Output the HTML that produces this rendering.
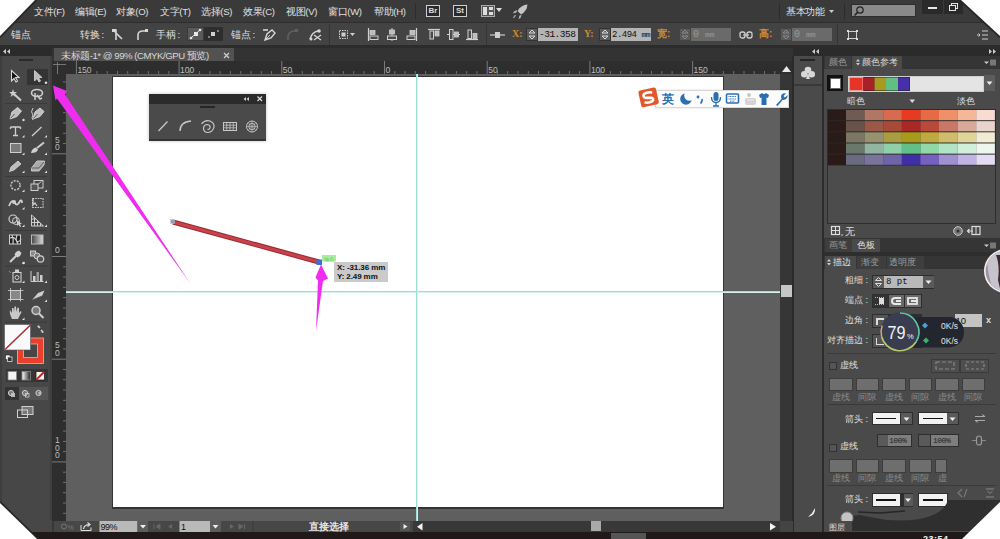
<!DOCTYPE html>
<html><head><meta charset="utf-8">
<style>
*{margin:0;padding:0;box-sizing:border-box}
html,body{width:1000px;height:539px;overflow:hidden;background:#3a3a3a;font-family:"Liberation Sans",sans-serif;color:#d0d0d0}
.a{position:absolute}
.t{position:absolute;font-size:9px;line-height:11px;white-space:nowrap;color:#e0e0e0;font-weight:500}
.m{font-size:9.6px;letter-spacing:-0.35px;line-height:12px}
</style></head><body>
<!-- menu bar -->
<div class="a" style="left:0;top:0;width:1000px;height:22px;background:#3a3a3a"></div>
<!-- control bar -->
<div class="a" style="left:0;top:22px;width:1000px;height:23px;background:#434343;border-top:1px solid #2e2e2e"></div>
<div class="a" style="left:0;top:45px;width:1000px;height:3px;background:#2c2c2c"></div>
<!-- doc row -->
<div class="a" style="left:52px;top:48px;width:728px;height:13px;background:#333"></div>
<div class="a" style="left:54px;top:48px;width:180px;height:13px;background:#525252"></div>
<!-- left toolbar -->
<div class="a" style="left:0;top:48px;width:52px;height:8px;background:#2b2b2b"></div>
<div class="a" style="left:0;top:56px;width:52px;height:476px;background:#474747"></div>
<!-- rulers -->
<div class="a" style="left:52px;top:61px;width:728px;height:13px;background:#2e2e2e"></div>
<div class="a" style="left:52px;top:61px;width:14px;height:460px;background:#2e2e2e"></div>
<!-- canvas -->
<div class="a" style="left:66px;top:74px;width:714px;height:447px;background:#5f5f5f"></div>
<div class="a" style="left:112px;top:76px;width:612px;height:433px;background:#343434"></div>
<div class="a" style="left:113px;top:77px;width:610px;height:430px;background:#fff"></div>
<!-- guides -->
<div class="a" style="left:66px;top:291px;width:714px;height:1px;background:#9edcd8"></div><div class="a" style="left:66px;top:292px;width:714px;height:1px;background:#d4f2f0"></div>
<div class="a" style="left:416px;top:74px;width:1px;height:447px;background:#9edcd8"></div><div class="a" style="left:417px;top:74px;width:1px;height:447px;background:#d4f2f0"></div>
<!-- vscroll -->
<div class="a" style="left:780px;top:61px;width:13px;height:460px;background:#2f2f2f"></div>
<!-- dock + right panel -->
<div class="a" style="left:793px;top:48px;width:207px;height:8px;background:#2b2b2b"></div>
<div class="a" style="left:793px;top:56px;width:29px;height:475px;background:#474747"></div>
<div class="a" style="left:822px;top:56px;width:2px;height:475px;background:#2b2b2b"></div>
<div class="a" style="left:824px;top:56px;width:176px;height:475px;background:#4b4b4b"></div>
<!-- status bar -->
<div class="a" style="left:52px;top:521px;width:728px;height:11px;background:#3d3d3d"></div>
<div class="a" style="left:0;top:532px;width:1000px;height:7px;background:#1f1a19"></div>

<!-- menu texts -->
<div class="t m" style="left:34px;top:6px">文件(F)</div>
<div class="t m" style="left:75px;top:6px">编辑(E)</div>
<div class="t m" style="left:116px;top:6px">对象(O)</div>
<div class="t m" style="left:160px;top:6px">文字(T)</div>
<div class="t m" style="left:201px;top:6px">选择(S)</div>
<div class="t m" style="left:243px;top:6px">效果(C)</div>
<div class="t m" style="left:286px;top:6px">视图(V)</div>
<div class="t m" style="left:328px;top:6px">窗口(W)</div>
<div class="t m" style="left:374px;top:6px">帮助(H)</div>
<div class="a" style="left:415px;top:3px;width:1px;height:16px;background:#2c2c2c"></div>
<div class="a" style="left:426px;top:5px;width:14px;height:12px;border:1px solid #cfcfcf;background:#2a2a2a;font-size:8px;line-height:10px;text-align:center;color:#ddd;font-weight:bold">Br</div>
<div class="a" style="left:453px;top:5px;width:14px;height:12px;border:1px solid #cfcfcf;background:#2a2a2a;font-size:8px;line-height:10px;text-align:center;color:#ddd;font-weight:bold">St</div>
<div class="a" style="left:481px;top:5px;width:14px;height:12px;border:1px solid #aaa;background:#555"></div>
<div class="a" style="left:483px;top:7px;width:4px;height:8px;background:#ddd"></div>
<div class="a" style="left:489px;top:7px;width:4px;height:3px;background:#ddd"></div>
<div class="a" style="left:489px;top:12px;width:4px;height:3px;background:#ddd"></div>
<svg class="a" style="left:496px;top:8px" width="7" height="5"><polygon points="0,0 6,0 3,4" fill="#ddd"/></svg>
<svg class="a" style="left:512px;top:3px" width="17" height="17"><path d="M15.5,1.5 Q9,2 5.5,8 L9,11.5 Q15,8 15.5,1.5 Z" fill="#c4c4c4"/><path d="M5,7 L2,8.5 L1,10.5 L4.5,9.5 Z M9.5,12 L8.5,15 L6.5,16 L7.5,12.5 Z" fill="#b8b8b8"/><path d="M3.5,12 L1.5,15" stroke="#aaa" stroke-width="1.3"/></svg>
<div class="a" style="left:779px;top:3px;width:1px;height:16px;background:#2c2c2c"></div>
<div class="t m" style="left:786px;top:6px">基本功能</div>
<svg class="a" style="left:829px;top:10px" width="6" height="4"><polygon points="0,0 5,0 2.5,3" fill="#ccc"/></svg>
<div class="a" style="left:844px;top:3px;width:1px;height:16px;background:#2c2c2c"></div>
<div class="a" style="left:851px;top:4px;width:65px;height:13px;background:#8a8a8a;border:1px solid #2e2e2e"></div>
<svg class="a" style="left:853px;top:5px" width="12" height="12"><circle cx="7" cy="5" r="3.2" fill="none" stroke="#222" stroke-width="1.2"/><line x1="4.6" y1="7.4" x2="1.5" y2="10.5" stroke="#222" stroke-width="1.5"/></svg>
<div class="a" style="left:922px;top:0;width:21px;height:14px;background:#2a2a2a"></div>
<div class="a" style="left:928px;top:7px;width:9px;height:2px;background:#e6e6e6"></div>
<div class="a" style="left:944px;top:0;width:19px;height:14px;background:#2a2a2a"></div>
<div class="a" style="left:951px;top:3px;width:7px;height:6px;border:1px solid #e6e6e6"></div>
<div class="a" style="left:949px;top:5px;width:7px;height:6px;border:1px solid #e6e6e6;background:#2a2a2a"></div>


<!-- control bar content -->
<div class="t m" style="left:11px;top:29px">锚点</div>
<div class="t m" style="left:80px;top:29px">转换 :</div>
<svg class="a" style="left:111px;top:28px" width="14" height="14"><path d="M2,2 H5 V12 M4,4 L11,11" stroke="#d6d6d6" stroke-width="1.6" fill="none"/><rect x="1" y="1" width="4" height="3" fill="#d6d6d6"/></svg>
<svg class="a" style="left:135px;top:28px" width="14" height="14"><path d="M3,12 V7 Q3,3 8,3 H12" stroke="#d6d6d6" stroke-width="1.6" fill="none"/><rect x="10" y="1" width="3" height="3" fill="#d6d6d6"/></svg>
<div class="t m" style="left:156px;top:29px">手柄 :</div>
<div class="a" style="left:187px;top:27px;width:17px;height:14px;background:#5a5a5a;border:1px solid #3a3a3a"></div>
<svg class="a" style="left:187px;top:27px" width="17" height="14"><path d="M4,11 L13,3" stroke="#e0e0e0" stroke-width="1"/><rect x="7" y="5" width="4" height="4" fill="#e8e8e8"/><circle cx="4" cy="11" r="1.3" fill="#e8e8e8"/><circle cx="13" cy="3" r="1.3" fill="#e8e8e8"/></svg>
<div class="a" style="left:204px;top:27px;width:19px;height:14px;background:#2e2e2e"></div>
<svg class="a" style="left:204px;top:27px" width="19" height="14"><rect x="7" y="5" width="4" height="4" fill="#d0d0d0"/><circle cx="5" cy="10" r="0.9" fill="#aaa"/><circle cx="14" cy="4" r="0.9" fill="#aaa"/></svg>
<div class="t m" style="left:231px;top:29px">锚点 :</div>
<svg class="a" style="left:262px;top:28px" width="15" height="13"><path d="M3,12 L5,6 L10,2 L13,5 L9,10 Z" fill="none" stroke="#d6d6d6" stroke-width="1.4"/><path d="M1,2 H6" stroke="#d6d6d6" stroke-width="1.6"/><path d="M4,11 L8,7" stroke="#d6d6d6" stroke-width="1"/></svg>
<svg class="a" style="left:285px;top:28px" width="14" height="13"><path d="M3,12 V8 Q4,3 10,3" stroke="#606060" stroke-width="1.6" fill="none"/><rect x="10" y="1" width="3" height="3" fill="#606060"/></svg>
<svg class="a" style="left:308px;top:28px" width="15" height="13"><path d="M2,11 Q4,4 10,3" stroke="#d6d6d6" stroke-width="1.5" fill="none"/><circle cx="11" cy="3" r="1.8" fill="#d6d6d6"/><path d="M6,7 L13,12 M6,12 L13,7" stroke="#d6d6d6" stroke-width="1.3"/><circle cx="3" cy="11" r="1.5" fill="#d6d6d6"/></svg>
<div class="a" style="left:329px;top:24px;width:1px;height:21px;background:#353535"></div>
<svg class="a" style="left:338px;top:29px" width="19" height="12"><rect x="1.5" y="1.5" width="8" height="8" fill="none" stroke="#cfcfcf" stroke-dasharray="1.5,1"/><rect x="3.5" y="3.5" width="4" height="4" fill="#cfcfcf"/><polygon points="12,4 17,4 14.5,7" fill="#cfcfcf"/></svg>
<svg class="a" style="left:367px;top:28px" width="12" height="13"><path d="M1.5,0 V13" stroke="#d0d0d0" stroke-width="1.2"/><rect x="3" y="2.5" width="5" height="4" fill="#bdbdbd" stroke="#d0d0d0" stroke-width="0.8"/><rect x="3" y="8" width="8" height="3.5" fill="#4a4a4a" stroke="#d0d0d0" stroke-width="1"/></svg>
<svg class="a" style="left:386px;top:28px" width="12" height="13"><path d="M6,0 V13" stroke="#d0d0d0" stroke-width="1"/><rect x="3.5" y="2" width="5" height="4" fill="#bdbdbd" stroke="#d0d0d0" stroke-width="0.8"/><rect x="1.5" y="8" width="9" height="3.5" fill="#4a4a4a" stroke="#d0d0d0" stroke-width="1"/></svg>
<svg class="a" style="left:406px;top:28px" width="12" height="13"><path d="M10.5,0 V13" stroke="#d0d0d0" stroke-width="1.2"/><rect x="4" y="2.5" width="5" height="4" fill="#bdbdbd" stroke="#d0d0d0" stroke-width="0.8"/><rect x="1" y="8" width="8" height="3.5" fill="#4a4a4a" stroke="#d0d0d0" stroke-width="1"/></svg>
<svg class="a" style="left:428px;top:28px" width="12" height="13"><path d="M0,1.5 H12" stroke="#d0d0d0" stroke-width="1.2"/><rect x="2" y="3" width="3.5" height="8" fill="#4a4a4a" stroke="#d0d0d0" stroke-width="1"/><rect x="7" y="3" width="4" height="5" fill="#bdbdbd" stroke="#d0d0d0" stroke-width="0.8"/></svg>
<svg class="a" style="left:447px;top:28px" width="13" height="13"><path d="M0,6.5 H13" stroke="#d0d0d0" stroke-width="1"/><rect x="2.5" y="1.5" width="3.5" height="10" fill="#4a4a4a" stroke="#d0d0d0" stroke-width="1"/><rect x="7.5" y="4" width="4" height="5" fill="#bdbdbd" stroke="#d0d0d0" stroke-width="0.8"/></svg>
<svg class="a" style="left:466px;top:28px" width="12" height="13"><path d="M0,11.5 H12" stroke="#d0d0d0" stroke-width="1.2"/><rect x="2" y="2" width="3.5" height="8.5" fill="#4a4a4a" stroke="#d0d0d0" stroke-width="1"/><rect x="7" y="5.5" width="4" height="5" fill="#bdbdbd" stroke="#d0d0d0" stroke-width="0.8"/></svg>
<div class="a" style="left:486px;top:24px;width:1px;height:21px;background:#353535"></div>
<svg class="a" style="left:489px;top:29px" width="17" height="12"><path d="M1,6 H16" stroke="#cfcfcf" stroke-width="1.2"/><rect x="6" y="3" width="5" height="6" fill="#cfcfcf"/></svg>
<div class="a" style="left:512px;top:28px;font-size:10px;line-height:12px;color:#d08a30;font-family:'Liberation Serif',serif;font-weight:bold">X:</div>
<div class="a" style="left:526px;top:28px;width:12px;height:13px;background:#5c5c5c;border:1px solid #333"></div>
<svg class="a" style="left:526px;top:28px" width="12" height="13"><polygon points="3,5 6,2 9,5" fill="none" stroke="#ddd" stroke-width="1"/><polygon points="3,8 6,11 9,8" fill="none" stroke="#ddd" stroke-width="1"/></svg>
<div class="a" style="left:538px;top:28px;width:40px;height:13px;background:#b4b4b4;font-family:'Liberation Mono',monospace;font-size:9.5px;line-height:13px;color:#111;overflow:hidden;padding-left:1px;letter-spacing:-0.5px">-31.358 r</div>
<div class="a" style="left:584px;top:28px;font-size:10px;line-height:12px;color:#d08a30;font-family:'Liberation Serif',serif;font-weight:bold">Y:</div>
<div class="a" style="left:599px;top:28px;width:12px;height:13px;background:#5c5c5c;border:1px solid #333"></div>
<svg class="a" style="left:599px;top:28px" width="12" height="13"><polygon points="3,5 6,2 9,5" fill="none" stroke="#ddd" stroke-width="1"/><polygon points="3,8 6,11 9,8" fill="none" stroke="#ddd" stroke-width="1"/></svg>
<div class="a" style="left:611px;top:28px;width:40px;height:13px;background:#b4b4b4;font-family:'Liberation Mono',monospace;font-size:9px;line-height:13px;color:#111;overflow:hidden;padding-left:1px;letter-spacing:-0.5px">2.494 <span style="font-size:8px">mm</span></div>
<div class="a" style="left:657px;top:28px;font-size:10px;line-height:12px;color:#d08a30;font-weight:bold">宽:</div>
<div class="a" style="left:679px;top:28px;width:12px;height:13px;background:#5a5a5a;border:1px solid #444"></div>
<svg class="a" style="left:679px;top:28px" width="12" height="13"><polygon points="3,5 6,2 9,5" fill="none" stroke="#888" stroke-width="1"/><polygon points="3,8 6,11 9,8" fill="none" stroke="#888" stroke-width="1"/></svg>
<div class="a" style="left:691px;top:28px;width:40px;height:13px;background:#6a6a6a;font-family:'Liberation Mono',monospace;font-size:10px;line-height:13px;color:#9a9a9a;overflow:hidden;padding-left:2px">0 <span style="font-size:8px">mm</span></div>
<svg class="a" style="left:739px;top:29px" width="14" height="12"><rect x="1" y="3" width="5" height="6" rx="2" fill="none" stroke="#d0d0d0" stroke-width="1.3"/><rect x="8" y="3" width="5" height="6" rx="2" fill="none" stroke="#d0d0d0" stroke-width="1.3"/><path d="M4,6 H10" stroke="#d0d0d0" stroke-width="1.2"/></svg>
<div class="a" style="left:759px;top:28px;font-size:10px;line-height:12px;color:#d08a30;font-weight:bold">高:</div>
<div class="a" style="left:780px;top:28px;width:12px;height:13px;background:#5a5a5a;border:1px solid #444"></div>
<svg class="a" style="left:780px;top:28px" width="12" height="13"><polygon points="3,5 6,2 9,5" fill="none" stroke="#888" stroke-width="1"/><polygon points="3,8 6,11 9,8" fill="none" stroke="#888" stroke-width="1"/></svg>
<div class="a" style="left:792px;top:28px;width:40px;height:13px;background:#6a6a6a;font-family:'Liberation Mono',monospace;font-size:10px;line-height:13px;color:#9a9a9a;overflow:hidden;padding-left:2px">0 <span style="font-size:8px">mm</span></div>
<div class="a" style="left:837px;top:24px;width:1px;height:21px;background:#353535"></div>
<svg class="a" style="left:846px;top:29px" width="13" height="12"><rect x="2.5" y="2.5" width="8" height="7" fill="none" stroke="#cfcfcf" stroke-width="1"/><rect x="1" y="1" width="2" height="2" fill="#ddd"/><rect x="10" y="1" width="2" height="2" fill="#ddd"/><rect x="1" y="9" width="2" height="2" fill="#ddd"/><rect x="10" y="9" width="2" height="2" fill="#ddd"/></svg>
<svg class="a" style="left:976px;top:29px" width="13" height="12"><path d="M6,2 H12 M6,6 H12 M6,10 H12" stroke="#cfcfcf" stroke-width="1.2"/><path d="M1,6 H4 M2.5,4.5 L4,6 L2.5,7.5" stroke="#cfcfcf" stroke-width="1"/></svg>


<!-- doc tab -->
<div class="t" style="left:61px;top:49.5px;color:#d8d8d8;font-size:9.6px;letter-spacing:-0.45px;line-height:12px">未标题-1* @ 99% (CMYK/GPU 预览)</div>
<svg class="a" style="left:223px;top:52px" width="7" height="7"><path d="M1,1 L6,6 M6,1 L1,6" stroke="#cfcfcf" stroke-width="1.2"/></svg>
<!-- panel header arrows -->
<svg class="a" style="left:3px;top:49px" width="8" height="6"><polygon points="3,0 3,5 0,2.5" fill="#ccc"/><polygon points="7,0 7,5 4,2.5" fill="#ccc"/></svg>
<svg class="a" style="left:812px;top:49px" width="8" height="6"><polygon points="3,0 3,5 0,2.5" fill="#ccc"/><polygon points="7,0 7,5 4,2.5" fill="#ccc"/></svg>
<svg class="a" style="left:989px;top:49px" width="8" height="6"><polygon points="0,0 0,5 3,2.5" fill="#ccc"/><polygon points="4,0 4,5 7,2.5" fill="#ccc"/></svg>

<svg class="a" style="left:66px;top:61px" width="714" height="13"><rect x="9.9" y="0" width="1" height="13" fill="#7a7a7a"/><rect x="20.2" y="10" width="1" height="3" fill="#6e6e6e"/><rect x="30.4" y="10" width="1" height="3" fill="#6e6e6e"/><rect x="40.7" y="10" width="1" height="3" fill="#6e6e6e"/><rect x="51.0" y="10" width="1" height="3" fill="#6e6e6e"/><rect x="61.2" y="10" width="1" height="3" fill="#6e6e6e"/><rect x="71.5" y="10" width="1" height="3" fill="#6e6e6e"/><rect x="81.8" y="10" width="1" height="3" fill="#6e6e6e"/><rect x="92.1" y="10" width="1" height="3" fill="#6e6e6e"/><rect x="102.3" y="10" width="1" height="3" fill="#6e6e6e"/><rect x="112.6" y="0" width="1" height="13" fill="#7a7a7a"/><rect x="122.9" y="10" width="1" height="3" fill="#6e6e6e"/><rect x="133.1" y="10" width="1" height="3" fill="#6e6e6e"/><rect x="143.4" y="10" width="1" height="3" fill="#6e6e6e"/><rect x="153.7" y="10" width="1" height="3" fill="#6e6e6e"/><rect x="163.9" y="10" width="1" height="3" fill="#6e6e6e"/><rect x="174.2" y="10" width="1" height="3" fill="#6e6e6e"/><rect x="184.5" y="10" width="1" height="3" fill="#6e6e6e"/><rect x="194.8" y="10" width="1" height="3" fill="#6e6e6e"/><rect x="205.0" y="10" width="1" height="3" fill="#6e6e6e"/><rect x="215.3" y="0" width="1" height="13" fill="#7a7a7a"/><rect x="225.6" y="10" width="1" height="3" fill="#6e6e6e"/><rect x="235.8" y="10" width="1" height="3" fill="#6e6e6e"/><rect x="246.1" y="10" width="1" height="3" fill="#6e6e6e"/><rect x="256.4" y="10" width="1" height="3" fill="#6e6e6e"/><rect x="266.6" y="10" width="1" height="3" fill="#6e6e6e"/><rect x="276.9" y="10" width="1" height="3" fill="#6e6e6e"/><rect x="287.2" y="10" width="1" height="3" fill="#6e6e6e"/><rect x="297.5" y="10" width="1" height="3" fill="#6e6e6e"/><rect x="307.7" y="10" width="1" height="3" fill="#6e6e6e"/><rect x="318.0" y="0" width="1" height="13" fill="#7a7a7a"/><rect x="328.3" y="10" width="1" height="3" fill="#6e6e6e"/><rect x="338.5" y="10" width="1" height="3" fill="#6e6e6e"/><rect x="348.8" y="10" width="1" height="3" fill="#6e6e6e"/><rect x="359.1" y="10" width="1" height="3" fill="#6e6e6e"/><rect x="369.4" y="10" width="1" height="3" fill="#6e6e6e"/><rect x="379.6" y="10" width="1" height="3" fill="#6e6e6e"/><rect x="389.9" y="10" width="1" height="3" fill="#6e6e6e"/><rect x="400.2" y="10" width="1" height="3" fill="#6e6e6e"/><rect x="410.4" y="10" width="1" height="3" fill="#6e6e6e"/><rect x="420.7" y="0" width="1" height="13" fill="#7a7a7a"/><rect x="431.0" y="10" width="1" height="3" fill="#6e6e6e"/><rect x="441.2" y="10" width="1" height="3" fill="#6e6e6e"/><rect x="451.5" y="10" width="1" height="3" fill="#6e6e6e"/><rect x="461.8" y="10" width="1" height="3" fill="#6e6e6e"/><rect x="472.0" y="10" width="1" height="3" fill="#6e6e6e"/><rect x="482.3" y="10" width="1" height="3" fill="#6e6e6e"/><rect x="492.6" y="10" width="1" height="3" fill="#6e6e6e"/><rect x="502.9" y="10" width="1" height="3" fill="#6e6e6e"/><rect x="513.1" y="10" width="1" height="3" fill="#6e6e6e"/><rect x="523.4" y="0" width="1" height="13" fill="#7a7a7a"/><rect x="533.7" y="10" width="1" height="3" fill="#6e6e6e"/><rect x="543.9" y="10" width="1" height="3" fill="#6e6e6e"/><rect x="554.2" y="10" width="1" height="3" fill="#6e6e6e"/><rect x="564.5" y="10" width="1" height="3" fill="#6e6e6e"/><rect x="574.8" y="10" width="1" height="3" fill="#6e6e6e"/><rect x="585.0" y="10" width="1" height="3" fill="#6e6e6e"/><rect x="595.3" y="10" width="1" height="3" fill="#6e6e6e"/><rect x="605.6" y="10" width="1" height="3" fill="#6e6e6e"/><rect x="615.8" y="10" width="1" height="3" fill="#6e6e6e"/><rect x="626.1" y="0" width="1" height="13" fill="#7a7a7a"/><rect x="636.4" y="10" width="1" height="3" fill="#6e6e6e"/><rect x="646.6" y="10" width="1" height="3" fill="#6e6e6e"/><rect x="656.9" y="10" width="1" height="3" fill="#6e6e6e"/><rect x="667.2" y="10" width="1" height="3" fill="#6e6e6e"/><rect x="677.5" y="10" width="1" height="3" fill="#6e6e6e"/><rect x="687.7" y="10" width="1" height="3" fill="#6e6e6e"/><rect x="698.0" y="10" width="1" height="3" fill="#6e6e6e"/><rect x="708.3" y="10" width="1" height="3" fill="#6e6e6e"/><text x="319.5" y="12" font-size="8.5" fill="#bdbdbd" font-family="Liberation Sans">0</text><text x="422.2" y="12" font-size="8.5" fill="#bdbdbd" font-family="Liberation Sans">50</text><text x="524.9" y="12" font-size="8.5" fill="#bdbdbd" font-family="Liberation Sans">100</text><text x="627.6" y="12" font-size="8.5" fill="#bdbdbd" font-family="Liberation Sans">150</text><text x="216.8" y="12" font-size="8.5" fill="#bdbdbd" font-family="Liberation Sans">50</text><text x="114.1" y="12" font-size="8.5" fill="#bdbdbd" font-family="Liberation Sans">100</text><text x="11.4" y="12" font-size="8.5" fill="#bdbdbd" font-family="Liberation Sans">150</text></svg>
<svg class="a" style="left:52px;top:74px" width="14" height="447"><rect x="11" y="7.4" width="3" height="1" fill="#6e6e6e"/><rect x="11" y="17.7" width="3" height="1" fill="#6e6e6e"/><rect x="11" y="27.9" width="3" height="1" fill="#6e6e6e"/><rect x="11" y="38.2" width="3" height="1" fill="#6e6e6e"/><rect x="11" y="48.5" width="3" height="1" fill="#6e6e6e"/><rect x="11" y="58.8" width="3" height="1" fill="#6e6e6e"/><rect x="11" y="69.0" width="3" height="1" fill="#6e6e6e"/><rect x="0" y="79.3" width="14" height="1" fill="#7a7a7a"/><rect x="11" y="89.6" width="3" height="1" fill="#6e6e6e"/><rect x="11" y="99.8" width="3" height="1" fill="#6e6e6e"/><rect x="11" y="110.1" width="3" height="1" fill="#6e6e6e"/><rect x="11" y="120.4" width="3" height="1" fill="#6e6e6e"/><rect x="11" y="130.7" width="3" height="1" fill="#6e6e6e"/><rect x="11" y="140.9" width="3" height="1" fill="#6e6e6e"/><rect x="11" y="151.2" width="3" height="1" fill="#6e6e6e"/><rect x="11" y="161.5" width="3" height="1" fill="#6e6e6e"/><rect x="11" y="171.7" width="3" height="1" fill="#6e6e6e"/><rect x="0" y="182.0" width="14" height="1" fill="#7a7a7a"/><rect x="11" y="192.3" width="3" height="1" fill="#6e6e6e"/><rect x="11" y="202.5" width="3" height="1" fill="#6e6e6e"/><rect x="11" y="212.8" width="3" height="1" fill="#6e6e6e"/><rect x="11" y="223.1" width="3" height="1" fill="#6e6e6e"/><rect x="11" y="233.4" width="3" height="1" fill="#6e6e6e"/><rect x="11" y="243.6" width="3" height="1" fill="#6e6e6e"/><rect x="11" y="253.9" width="3" height="1" fill="#6e6e6e"/><rect x="11" y="264.2" width="3" height="1" fill="#6e6e6e"/><rect x="11" y="274.4" width="3" height="1" fill="#6e6e6e"/><rect x="0" y="284.7" width="14" height="1" fill="#7a7a7a"/><rect x="11" y="295.0" width="3" height="1" fill="#6e6e6e"/><rect x="11" y="305.2" width="3" height="1" fill="#6e6e6e"/><rect x="11" y="315.5" width="3" height="1" fill="#6e6e6e"/><rect x="11" y="325.8" width="3" height="1" fill="#6e6e6e"/><rect x="11" y="336.1" width="3" height="1" fill="#6e6e6e"/><rect x="11" y="346.3" width="3" height="1" fill="#6e6e6e"/><rect x="11" y="356.6" width="3" height="1" fill="#6e6e6e"/><rect x="11" y="366.9" width="3" height="1" fill="#6e6e6e"/><rect x="11" y="377.1" width="3" height="1" fill="#6e6e6e"/><rect x="0" y="387.4" width="14" height="1" fill="#7a7a7a"/><rect x="11" y="397.7" width="3" height="1" fill="#6e6e6e"/><rect x="11" y="407.9" width="3" height="1" fill="#6e6e6e"/><rect x="11" y="418.2" width="3" height="1" fill="#6e6e6e"/><rect x="11" y="428.5" width="3" height="1" fill="#6e6e6e"/><rect x="11" y="438.8" width="3" height="1" fill="#6e6e6e"/><text x="3" y="68.8" font-size="8.5" fill="#bdbdbd" font-family="Liberation Sans">5</text><text x="3" y="76.3" font-size="8.5" fill="#bdbdbd" font-family="Liberation Sans">0</text><text x="3" y="179.0" font-size="8.5" fill="#bdbdbd" font-family="Liberation Sans">0</text><text x="3" y="274.2" font-size="8.5" fill="#bdbdbd" font-family="Liberation Sans">5</text><text x="3" y="281.7" font-size="8.5" fill="#bdbdbd" font-family="Liberation Sans">0</text><text x="3" y="369.4" font-size="8.5" fill="#bdbdbd" font-family="Liberation Sans">1</text><text x="3" y="376.9" font-size="8.5" fill="#bdbdbd" font-family="Liberation Sans">0</text><text x="3" y="384.4" font-size="8.5" fill="#bdbdbd" font-family="Liberation Sans">0</text></svg>
<svg class="a" style="left:52px;top:61px" width="14" height="13"><path d="M5.5,1 V13 M1,3.5 H14" stroke="#8a8a8a" stroke-width="0.8"/></svg>

<!-- toolbar -->
<svg class="a" style="left:0;top:56px" width="52" height="464" viewBox="0 56 52 464">
<rect x="0" y="56" width="2" height="464" fill="#3e3e3e"/>
<rect x="50" y="56" width="2" height="464" fill="#3f3f3f"/>
<rect x="19" y="59" width="14" height="2" fill="#2a2a2a"/>
<g fill="#cfcfcf">
<polygon points="46,84.5 48,84.5 48,82.5"/>
</g>
<rect x="27" y="69" width="21" height="16" fill="#343434"/>
<!-- selection -->
<path d="M11.5,70.5 L11.5,81 L14,78.5 L16,82 L17.5,81 L15.5,77.5 L19,77.5 Z" fill="#111" stroke="#d8d8d8" stroke-width="1.1"/>
<!-- direct selection -->
<path d="M34.5,70.5 L34.5,81 L37,78.5 L39,82 L40.5,81 L38.5,77.5 L42,77.5 Z" fill="#bbb" stroke="#d8d8d8" stroke-width="0.8"/>
<circle cx="46" cy="82.8" r="1.3" fill="#ddd"/>
<!-- sep -->
<rect x="5" y="103" width="42" height="1" fill="#3a3a3a"/>
<!-- magic wand -->
<path d="M14,94 L21,100.5" stroke="#cfcfcf" stroke-width="2"/>
<path d="M13,89 L14,92 L17,92 L14.5,94 L15.5,97 L13,95 L10.5,97 L11.5,94 L9,92 L12,92 Z" fill="#cfcfcf"/>
<!-- lasso -->
<ellipse cx="37" cy="93" rx="5.5" ry="3.5" fill="none" stroke="#cfcfcf" stroke-width="1.6"/>
<path d="M35,93 L35,100 M37,95 L40,99 L42,98" stroke="#cfcfcf" stroke-width="1.5" fill="none"/>
<!-- pen -->
<path d="M10,119 L12,112 L17,108 L21,111.5 L17,116.5 Z" fill="#bfbfbf" stroke="#cfcfcf" stroke-width="1"/>
<path d="M10.5,118.5 L14.5,114" stroke="#444" stroke-width="0.8"/>
<path d="M17,107.5 L21.5,111.5" stroke="#cfcfcf" stroke-width="1.5"/>
<circle cx="23.5" cy="120" r="1.2" fill="#ddd"/>
<!-- curvature pen -->
<path d="M33,119 L35,112 L40,108 L44,111.5 L40,116.5 Z" fill="#bfbfbf" stroke="#cfcfcf" stroke-width="1"/>
<path d="M33.5,118.5 L37.5,114" stroke="#444" stroke-width="0.8"/>
<path d="M33,108 Q30,112 33,115 Q31,118 33,120" stroke="#cfcfcf" stroke-width="1" fill="none"/>
<!-- type T -->
<path d="M10.5,127 H20.5 M15.5,127 V135.5 M13,135.5 H18 M10.5,127 V129 M20.5,127 V129" stroke="#cfcfcf" stroke-width="1.3" fill="none"/>
<!-- line -->
<path d="M32,136 L41.5,127" stroke="#cfcfcf" stroke-width="1.3"/>
<!-- rect -->
<rect x="10.5" y="143.5" width="10.5" height="9" fill="#7a7a7a" stroke="#cfcfcf" stroke-width="1"/>
<!-- brush -->
<path d="M37,148 L44,142.5" stroke="#cfcfcf" stroke-width="2"/>
<path d="M31,153 Q32,148 36,147.5 L38,149.5 Q37,153 31,153 Z" fill="#cfcfcf"/>
<!-- pencil -->
<path d="M9.5,171.5 L11,167 L18,161 L21,164 L14,170 Z" fill="#bdbdbd" stroke="#cfcfcf" stroke-width="0.9"/>
<!-- eraser -->
<path d="M31.5,168 L37,161 L44.5,161 L44,165 L39,171 L31.5,171 Z" fill="#aaa" stroke="#cfcfcf" stroke-width="0.9"/>
<path d="M31.5,168 L39,168 L44,162" stroke="#555" stroke-width="0.8" fill="none"/>
<rect x="5" y="176" width="42" height="1" fill="#3a3a3a"/>
<!-- rotate -->
<circle cx="15.5" cy="185.3" r="4.6" fill="none" stroke="#cfcfcf" stroke-width="1.4" stroke-dasharray="2,1.2"/>
<!-- scale -->
<rect x="34" y="180.5" width="9" height="7.5" fill="none" stroke="#cfcfcf" stroke-width="1"/>
<rect x="31" y="184" width="7" height="6.5" fill="#555" stroke="#cfcfcf" stroke-width="1"/>
<path d="M37,185 L41.5,181.5" stroke="#cfcfcf" stroke-width="0.9"/>
<!-- warp -->
<path d="M9,206 Q12,198 15,203 Q17,207 20,201 Q22,199 22,203" stroke="#cfcfcf" stroke-width="1.8" fill="none"/>
<circle cx="14" cy="202" r="2" fill="#cfcfcf"/>
<!-- free transform -->
<rect x="32.5" y="198.5" width="10.5" height="9" fill="none" stroke="#cfcfcf" stroke-width="1.1" stroke-dasharray="1.6,1"/>
<path d="M33,198 L33,205 L35,203 L37,206" stroke="#cfcfcf" stroke-width="1.2" fill="none"/>
<!-- shape builder -->
<circle cx="13" cy="219" r="4" fill="none" stroke="#cfcfcf" stroke-width="1.2"/>
<circle cx="16" cy="221" r="3.5" fill="none" stroke="#cfcfcf" stroke-width="1"/>
<path d="M17,220 L17,226 L18.5,224.5 L20,227 L21,226.5 L20,224 L22,224 Z" fill="#cfcfcf"/>
<!-- perspective grid -->
<path d="M31.5,215 V226 H43.5 Z" fill="none" stroke="#cfcfcf" stroke-width="1"/>
<path d="M34.5,217 V226 M37.5,220 V226 M40.5,223 V226 M31.5,219 H36 M31.5,222.5 H40" stroke="#cfcfcf" stroke-width="1"/>
<rect x="5" y="230" width="42" height="1" fill="#3a3a3a"/>
<!-- mesh -->
<rect x="9.5" y="235" width="11" height="9" fill="#222" stroke="#cfcfcf" stroke-width="1"/>
<path d="M10,238 Q14,236 16,240 T21,239 M12,235 Q14,239 13,244 M17,235 Q15,240 18,244" stroke="#cfcfcf" stroke-width="1.2" fill="none"/>
<!-- gradient -->
<defs><linearGradient id="gr" x1="0" x2="1"><stop offset="0" stop-color="#444"/><stop offset="1" stop-color="#ddd"/></linearGradient>
<linearGradient id="gr2" x1="0" x2="1"><stop offset="0" stop-color="#fff"/><stop offset="1" stop-color="#222"/></linearGradient></defs>
<rect x="31.5" y="235" width="11.5" height="9" fill="url(#gr)" stroke="#bbb" stroke-width="1"/>
<!-- eyedropper -->
<path d="M10,262 L17,255" stroke="#cfcfcf" stroke-width="2"/>
<path d="M16,252 L19,250.5 L21.5,253 L20,256 L17.5,257.5 L14.5,254.5 Z" fill="#cfcfcf"/>
<circle cx="23.5" cy="263" r="1.2" fill="#ddd"/>
<!-- blend -->
<rect x="30.5" y="251" width="5" height="5" fill="#888" stroke="#cfcfcf" stroke-width="1"/>
<circle cx="37" cy="256" r="3" fill="#777" stroke="#cfcfcf" stroke-width="1"/>
<circle cx="40.5" cy="259" r="3.2" fill="#555" stroke="#cfcfcf" stroke-width="1.2"/>
<rect x="5" y="265.5" width="42" height="1" fill="#3a3a3a"/>
<!-- symbol sprayer -->
<rect x="13" y="272.5" width="8" height="9.5" fill="#444" stroke="#cfcfcf" stroke-width="1.1"/>
<rect x="15" y="269.5" width="4" height="3" fill="#cfcfcf"/>
<circle cx="17" cy="277.5" r="2" fill="none" stroke="#cfcfcf" stroke-width="1"/>
<path d="M9,271 L11,273" stroke="#888" stroke-width="1"/>
<!-- graph -->
<path d="M31,271 V281.5 H43.5" stroke="#cfcfcf" stroke-width="1" fill="none"/>
<rect x="33" y="276" width="2.5" height="5.5" fill="#cfcfcf"/><rect x="36.5" y="272" width="2.5" height="9.5" fill="#999"/><rect x="40" y="275" width="2.5" height="6.5" fill="#cfcfcf"/>
<!-- artboard -->
<rect x="10.5" y="290.5" width="10" height="9" fill="#888" stroke="#cfcfcf" stroke-width="1"/>
<path d="M8,290.5 H23.5 M8,299.5 H23.5 M10.5,288 V301.5 M20.5,288 V301.5" stroke="#cfcfcf" stroke-width="0.8"/>
<!-- slice -->
<path d="M32,300 L38,293 L44.5,290.5 L42,296 Z" fill="#cfcfcf"/>
<path d="M32,300 L42,296" stroke="#555" stroke-width="0.7"/>
<!-- hand -->
<path d="M12,319 Q9,313 10,310 L12,313 L12,308 L13.5,308 L14,312 L14.5,306.5 L16,306.5 L16.5,312 L17.5,307.5 L19,308 L19,313 L20.5,311 L21.5,312 Q19,317 18,319 Z" fill="#c8c8c8"/>
<!-- zoom -->
<circle cx="36" cy="310.5" r="4" fill="#7a7a7a" stroke="#cfcfcf" stroke-width="1.5"/>
<path d="M39,313.5 L43.5,318" stroke="#cfcfcf" stroke-width="2"/>
<g fill="#e0e0e0">
<polygon points="22,137.5 24.5,137.5 24.5,135"/><polygon points="44.5,137.5 47,137.5 47,135"/>
<polygon points="22,155 24.5,155 24.5,152.5"/><polygon points="44.5,155 47,155 47,152.5"/>
<polygon points="22,173 24.5,173 24.5,170.5"/><polygon points="44.5,173 47,173 47,170.5"/>
<polygon points="22,192 24.5,192 24.5,189.5"/><polygon points="44.5,192 47,192 47,189.5"/>
<polygon points="22,209.5 24.5,209.5 24.5,207"/>
<polygon points="22,227 24.5,227 24.5,224.5"/><polygon points="44.5,227 47,227 47,224.5"/>
<polygon points="22,264 24.5,264 24.5,261.5"/>
<polygon points="22,283 24.5,283 24.5,280.5"/><polygon points="44.5,283 47,283 47,280.5"/>
<polygon points="44.5,302 47,302 47,299.5"/>
<polygon points="22,320 24.5,320 24.5,317.5"/>
</g>
<rect x="5" y="321.5" width="42" height="1" fill="#3a3a3a"/>
<!-- fill / stroke -->
<rect x="17.5" y="338" width="26" height="25.5" fill="#e8402a" stroke="#f0b0a0" stroke-width="0.8"/>
<rect x="23.5" y="344" width="14" height="13.5" fill="#474747" stroke="#f0b0a0" stroke-width="0.8"/>
<rect x="4.5" y="324.5" width="26" height="25.5" fill="#fafafa" stroke="#555" stroke-width="0.6"/>
<path d="M5,349.5 L30.5,325" stroke="#a8303a" stroke-width="1.6"/>
<path d="M38,326 L40,328 M41,330 L43,332" stroke="#cfcfcf" stroke-width="1.5"/>
<circle cx="38.5" cy="326.5" r="1" fill="#cfcfcf"/><circle cx="42.5" cy="332" r="1" fill="#cfcfcf"/>
<rect x="5.5" y="355" width="4.5" height="4.5" fill="#fff" stroke="#222" stroke-width="0.6"/>
<rect x="7.5" y="357" width="4.5" height="4.5" fill="#333" stroke="#ddd" stroke-width="0.8"/>
<!-- color modes -->
<rect x="6" y="369" width="42" height="13" fill="#353535"/>
<rect x="8" y="371.5" width="8.5" height="8.5" fill="#f4f4f4" stroke="#888" stroke-width="0.8"/>
<rect x="22" y="371.5" width="8.5" height="8.5" fill="url(#gr2)" stroke="#888" stroke-width="0.8"/>
<rect x="36" y="371.5" width="8.5" height="8.5" fill="#f4f4f4" stroke="#222" stroke-width="0.8"/>
<path d="M36.5,379.5 L44,372" stroke="#c82020" stroke-width="1.8"/>
<!-- draw modes -->
<rect x="5" y="387" width="14" height="13" fill="#333"/>
<rect x="19" y="387" width="29" height="13" fill="#555"/>
<circle cx="11" cy="393" r="2.6" fill="#777" stroke="#cfcfcf" stroke-width="1"/><rect x="11" y="393" width="4" height="4" fill="#bbb"/>
<circle cx="25" cy="393" r="2.6" fill="#777" stroke="#cfcfcf" stroke-width="1"/><rect x="25.5" y="393.5" width="3.5" height="3.5" fill="none" stroke="#cfcfcf" stroke-width="0.8"/>
<circle cx="38.5" cy="393" r="2.6" fill="#777" stroke="#cfcfcf" stroke-width="1"/><rect x="38.5" y="392" width="2.5" height="2.5" fill="#bbb"/>
<!-- screen mode -->
<rect x="22" y="406.5" width="11" height="8" fill="#777" stroke="#cfcfcf" stroke-width="1"/>
<rect x="17.5" y="410" width="10" height="7.5" fill="none" stroke="#cfcfcf" stroke-width="1"/>
</svg>


<!-- floating line tools panel -->
<div class="a" style="left:149px;top:94px;width:117px;height:47px;background:#4a4a4a;box-shadow:0 0 3px rgba(0,0,0,0.25)"></div>
<div class="a" style="left:149px;top:94px;width:117px;height:10px;background:#2b2b2b"></div>
<div class="a" style="left:149px;top:139px;width:117px;height:2px;background:#333"></div>
<div class="a" style="left:200px;top:106px;width:15px;height:2px;background:#262626"></div>
<svg class="a" style="left:149px;top:94px" width="117" height="47">
<polygon points="97,3 97,7 94.5,5" fill="#ccc"/><polygon points="100,3 100,7 97.5,5" fill="#ccc"/>
<path d="M108.5,2.5 L113,7 M113,2.5 L108.5,7" stroke="#ddd" stroke-width="1.2"/>
<path d="M9.5,37 L18.5,27.5" stroke="#c8c8c8" stroke-width="1.3"/>
<path d="M31,37 Q31,28 42,27" stroke="#c8c8c8" stroke-width="1.4" fill="none"/>
<path d="M52.5,30 Q56,25.5 61,27 Q65.5,29 65,33 Q64,38 59,38.5 Q54.5,38.5 54.5,34 Q55,30.5 58.5,30.5 Q61.5,31 61,34 Q60,36 58.5,35" stroke="#c8c8c8" stroke-width="1.2" fill="none"/>
<rect x="74.5" y="28.5" width="13" height="8" fill="none" stroke="#c8c8c8" stroke-width="1"/>
<path d="M77.75,28.5 V36.5 M81,28.5 V36.5 M84.25,28.5 V36.5 M74.5,31.2 H87.5 M74.5,33.8 H87.5" stroke="#c8c8c8" stroke-width="0.8"/>
<circle cx="103" cy="32.5" r="5.5" fill="none" stroke="#c8c8c8" stroke-width="1"/>
<circle cx="103" cy="32.5" r="3.2" fill="none" stroke="#c8c8c8" stroke-width="0.9"/>
<path d="M97.5,32.5 H108.5 M103,27 V38 M99,28.5 L107,36.5 M107,28.5 L99,36.5" stroke="#c8c8c8" stroke-width="0.6"/>
</svg>
<!-- red stroke line -->
<svg class="a" style="left:66px;top:74px" width="714" height="447" viewBox="66 74 714 447">
<line x1="173" y1="222" x2="319" y2="262" stroke="#9a2a32" stroke-width="5"/>
<line x1="173" y1="222" x2="319" y2="262" stroke="#c9424b" stroke-width="3"/>
<rect x="170.5" y="219.5" width="4" height="4" fill="#8aa0b8" stroke="#c0c8d8" stroke-width="0.5"/>
<rect x="316.5" y="259.5" width="5.5" height="5.5" fill="#3f6fd0"/>
<rect x="322" y="255" width="14" height="6.5" fill="#a8eea0"/>
<text x="324" y="260.5" font-size="5" fill="#6ac060" font-family="Liberation Sans">锚点</text>
</svg>
<!-- tooltip -->
<div class="a" style="left:334px;top:262px;width:54px;height:20px;background:#cacaca"></div>
<div class="a" style="left:337px;top:263px;font-size:8px;line-height:9px;color:#111;font-weight:bold;white-space:nowrap;letter-spacing:-0.1px">X: -31.36 mm<br>Y: 2.49 mm</div>
<!-- scrollbars -->
<div class="a" style="left:780px;top:48px;width:13px;height:13px;background:#333"></div><div class="a" style="left:780px;top:61px;width:13px;height:13px;background:#2e2e2e"></div><div class="a" style="left:780px;top:74px;width:13px;height:447px;background:#363636"></div>
<div class="a" style="left:792px;top:56px;width:2px;height:476px;background:#2a2a2a"></div>
<svg class="a" style="left:781px;top:65px" width="11" height="8"><polygon points="5.5,1 10,7 1,7" fill="#e8e8e8"/></svg>
<div class="a" style="left:781px;top:285px;width:11px;height:12px;background:#c6c6c6"></div>
<!-- status bar -->
<div class="a" style="left:52px;top:521px;width:728px;height:11px;background:#383838"></div>
<div class="a" style="left:54px;top:521px;width:359px;height:11px;background:#474747"></div>
<div class="a" style="left:780px;top:521px;width:13px;height:11px;background:#444"></div>
<svg class="a" style="left:54px;top:521px" width="370" height="11">
<circle cx="10" cy="5.5" r="2.5" fill="none" stroke="#777" stroke-width="1"/><text x="13.5" y="8.5" font-size="7" fill="#777" font-family="Liberation Sans">%</text>
<path d="M27,4 V9.5 H37 V6.5" stroke="#e0e0e0" stroke-width="1" fill="none"/><path d="M29.5,8 Q30,4 35,3.5 M33.5,1.5 L36,3.5 L33.5,5.5" stroke="#e0e0e0" stroke-width="1.2" fill="none"/>
<rect x="45.5" y="0" width="38" height="11" fill="#b9b9b9"/>
<text x="46.5" y="9" font-size="9" fill="#111" font-family="Liberation Sans" letter-spacing="-0.5">99%</text>
<rect x="83.5" y="0" width="10.5" height="11" fill="#5c5c5c"/><polygon points="86,4 92,4 89,7.5" fill="#eee"/>
<path d="M100,3 V8 M106,3 L102,5.5 L106,8 Z" stroke="#666" fill="#666" stroke-width="1"/>
<polygon points="118,3 118,8 114,5.5" fill="#666"/>
<rect x="125.5" y="0" width="30.5" height="11" fill="#b9b9b9"/>
<text x="127" y="9" font-size="9" fill="#111" font-family="Liberation Sans">1</text>
<rect x="156" y="0" width="11" height="11" fill="#5c5c5c"/><polygon points="158.5,4 164.5,4 161.5,7.5" fill="#eee"/>
<polygon points="176,3 176,8 180,5.5" fill="#666"/>
<path d="M185,3 L189,5.5 L185,8 Z M190.5,3 V8" stroke="#666" fill="#666" stroke-width="1"/>
<rect x="198.5" y="0" width="1" height="11" fill="#3a3a3a"/>
<text x="255" y="9" font-size="9.5" fill="#e8e8e8" font-family="Liberation Sans" font-weight="bold">直接选择</text>
<rect x="346" y="1" width="10" height="9" fill="#555"/><polygon points="349.5,3 349.5,8 353.5,5.5" fill="#eee"/>
<polygon points="368.5,2 368.5,9.5 363,5.75" fill="#f4f4f4"/>
</svg>
<div class="a" style="left:591px;top:521px;width:10px;height:10px;background:#a9a9a9"></div>
<svg class="a" style="left:768px;top:521px" width="10" height="11"><polygon points="2,2 2,9.5 8,5.75" fill="#f4f4f4"/></svg>
<!-- dock -->
<div class="a" style="left:794px;top:56px;width:28px;height:476px;background:#4a4a4a"></div>
<div class="a" style="left:794px;top:84px;width:28px;height:2px;background:#393939"></div>
<div class="a" style="left:800px;top:59px;width:15px;height:2px;background:#262626"></div>
<svg class="a" style="left:798px;top:65px" width="20" height="16"><circle cx="10" cy="5" r="3.3" fill="#d8d8d8"/><circle cx="6.3" cy="9.3" r="3.3" fill="#d8d8d8"/><circle cx="13.7" cy="9.3" r="3.3" fill="#d8d8d8"/><path d="M10,8 L8,14 H12 Z" fill="#d8d8d8"/></svg>
<div class="a" style="left:822px;top:56px;width:2px;height:476px;background:#2c2c2c"></div>
<!-- right panel -->
<div class="a" style="left:824px;top:56px;width:176px;height:476px;background:#4a4a4a"></div>
<div class="a" style="left:824px;top:56px;width:176px;height:12.5px;background:#353535"></div>
<div class="a" style="left:824.5px;top:56px;width:26.5px;height:12.5px;background:#3e3e3e"></div>
<div class="t" style="left:829px;top:57px;color:#9c9c9c">颜色</div>
<div class="a" style="left:852px;top:56px;width:50px;height:13px;background:#4a4a4a"></div>
<svg class="a" style="left:855px;top:58px" width="6" height="9"><polygon points="3,1 5,3.5 1,3.5" fill="#ccc"/><polygon points="3,7.5 5,5 1,5" fill="#ccc"/></svg>
<div class="t" style="left:862px;top:57px;color:#d8d8d8">颜色参考</div>
<svg class="a" style="left:984px;top:59px" width="13" height="8"><polygon points="0,2.5 5,2.5 2.5,5" fill="#ccc"/><rect x="6" y="0.5" width="6" height="6" fill="#777"/></svg>
<div class="a" style="left:827px;top:75px;width:16px;height:16px;background:#111"></div>
<div class="a" style="left:829.5px;top:77.5px;width:11px;height:11px;background:#fff;border:1px solid #666"></div>
<div class="a" style="left:847.5px;top:75.5px;width:136px;height:16px;background:#e4e4e4;border:1px solid #cfcfcf"></div>
<svg class="a" style="left:847.5px;top:75.5px" width="136" height="16">
<rect x="1" y="1" width="61" height="14" fill="#222"/>
<rect x="1.5" y="1.5" width="13.5" height="13" fill="#e83428" stroke="#f0c0b8" stroke-width="0.8"/>
<rect x="15" y="1.5" width="11.5" height="13" fill="#a8202a"/>
<rect x="26.5" y="1.5" width="11.5" height="13" fill="#a89a20"/>
<rect x="38" y="1.5" width="12" height="13" fill="#60c080"/>
<rect x="50" y="1.5" width="11.5" height="13" fill="#4830a8"/>
</svg>
<div class="a" style="left:984px;top:75px;width:11px;height:16px;background:#5c5c5c"></div>
<svg class="a" style="left:984px;top:75px" width="11" height="16"><polygon points="2.5,6.5 8.5,6.5 5.5,10" fill="#eee"/></svg>
<div class="t" style="left:847px;top:96px;color:#e0e0e0">暗色</div>
<svg class="a" style="left:909px;top:99px" width="7" height="5"><polygon points="0.5,0.5 6,0.5 3.25,4" fill="#ddd"/></svg>
<div class="t" style="left:957px;top:96px;color:#e0e0e0">淡色</div>
<div class="a" style="left:827px;top:109px;width:169px;height:115px;border:1px solid #2e2e2e;background:#4c4c4c"></div>
<svg class="a" style="left:0;top:0" width="1000" height="539">
<rect x="827.5" y="109.5" width="168" height="56" fill="#2a2a2a"/>
<rect x="828" y="110.00" width="18" height="10.2" fill="#2a1b19"/><rect x="846.00" y="110.00" width="18.7" height="10.2" fill="#705a52"/><rect x="864.60" y="110.00" width="18.7" height="10.2" fill="#b07864"/><rect x="883.20" y="110.00" width="18.7" height="10.2" fill="#d86a50"/><rect x="901.80" y="110.00" width="18.7" height="10.2" fill="#e83a22"/><rect x="920.40" y="110.00" width="18.7" height="10.2" fill="#e86a45"/><rect x="939.00" y="110.00" width="18.7" height="10.2" fill="#f09068"/><rect x="957.60" y="110.00" width="18.7" height="10.2" fill="#f4b898"/><rect x="976.20" y="110.00" width="18.7" height="10.2" fill="#f8dcd2"/><rect x="828" y="121.15" width="18" height="10.2" fill="#2a1b19"/><rect x="846.00" y="121.15" width="18.7" height="10.2" fill="#68524a"/><rect x="864.60" y="121.15" width="18.7" height="10.2" fill="#9a5848"/><rect x="883.20" y="121.15" width="18.7" height="10.2" fill="#a84a38"/><rect x="901.80" y="121.15" width="18.7" height="10.2" fill="#a82828"/><rect x="920.40" y="121.15" width="18.7" height="10.2" fill="#b84a3a"/><rect x="939.00" y="121.15" width="18.7" height="10.2" fill="#c87868"/><rect x="957.60" y="121.15" width="18.7" height="10.2" fill="#d8a898"/><rect x="976.20" y="121.15" width="18.7" height="10.2" fill="#e8d4cc"/><rect x="828" y="132.30" width="18" height="10.2" fill="#2a1b19"/><rect x="846.00" y="132.30" width="18.7" height="10.2" fill="#7a7865"/><rect x="864.60" y="132.30" width="18.7" height="10.2" fill="#969270"/><rect x="883.20" y="132.30" width="18.7" height="10.2" fill="#aa9c40"/><rect x="901.80" y="132.30" width="18.7" height="10.2" fill="#a89a1a"/><rect x="920.40" y="132.30" width="18.7" height="10.2" fill="#c0aa40"/><rect x="939.00" y="132.30" width="18.7" height="10.2" fill="#d0bc6a"/><rect x="957.60" y="132.30" width="18.7" height="10.2" fill="#e0d498"/><rect x="976.20" y="132.30" width="18.7" height="10.2" fill="#f0ecd4"/><rect x="828" y="143.45" width="18" height="10.2" fill="#2a1b19"/><rect x="846.00" y="143.45" width="18.7" height="10.2" fill="#6a786c"/><rect x="864.60" y="143.45" width="18.7" height="10.2" fill="#92b4a2"/><rect x="883.20" y="143.45" width="18.7" height="10.2" fill="#90d0a8"/><rect x="901.80" y="143.45" width="18.7" height="10.2" fill="#60c088"/><rect x="920.40" y="143.45" width="18.7" height="10.2" fill="#90d8a8"/><rect x="939.00" y="143.45" width="18.7" height="10.2" fill="#b0e4c4"/><rect x="957.60" y="143.45" width="18.7" height="10.2" fill="#d0f0dc"/><rect x="976.20" y="143.45" width="18.7" height="10.2" fill="#eef6f0"/><rect x="828" y="154.60" width="18" height="10.2" fill="#2a1b19"/><rect x="846.00" y="154.60" width="18.7" height="10.2" fill="#6a6a80"/><rect x="864.60" y="154.60" width="18.7" height="10.2" fill="#7a749c"/><rect x="883.20" y="154.60" width="18.7" height="10.2" fill="#7064a8"/><rect x="901.80" y="154.60" width="18.7" height="10.2" fill="#4030a8"/><rect x="920.40" y="154.60" width="18.7" height="10.2" fill="#7860c0"/><rect x="939.00" y="154.60" width="18.7" height="10.2" fill="#a090d0"/><rect x="957.60" y="154.60" width="18.7" height="10.2" fill="#c0b4e4"/><rect x="976.20" y="154.60" width="18.7" height="10.2" fill="#e4dcf4"/>
</svg>
<svg class="a" style="left:830px;top:225px" width="170" height="12">
<rect x="1.5" y="1.5" width="8" height="8" fill="none" stroke="#ddd" stroke-width="1.2"/><path d="M1.5,5.5 H9.5 M5.5,1.5 V9.5" stroke="#ddd" stroke-width="1"/><circle cx="12" cy="10" r="0.8" fill="#ddd"/>
<text x="15" y="10" font-size="10" fill="#e0e0e0" font-family="Liberation Sans">无</text>
<circle cx="128" cy="6" r="4.3" fill="#777" stroke="#ccc" stroke-width="1"/><circle cx="128" cy="6" r="1.5" fill="#333"/>
<rect x="142" y="1.5" width="8" height="8" fill="none" stroke="#ddd" stroke-width="1.2"/><path d="M146,1.5 V9.5" stroke="#ddd" stroke-width="1"/><path d="M137.5,6 H143 M139.5,4 L137.5,6 L139.5,8" stroke="#ddd" stroke-width="1.2" fill="none"/>
</svg>
<!-- second panel (brush/swatch tabs) -->
<div class="a" style="left:824px;top:238px;width:176px;height:14px;background:#353535"></div>
<div class="a" style="left:824.5px;top:239px;width:27px;height:13px;background:#3e3e3e"></div>
<div class="t" style="left:829px;top:240px;color:#9c9c9c">画笔</div>
<div class="a" style="left:852px;top:239px;width:28px;height:13px;background:#4a4a4a"></div>
<div class="t" style="left:857px;top:240px;color:#e0e0e0">色板</div>
<svg class="a" style="left:984px;top:242px" width="13" height="8"><polygon points="0,2.5 5,2.5 2.5,5" fill="#ccc"/><rect x="6" y="0.5" width="6" height="6" fill="#777"/></svg>
<div class="a" style="left:824px;top:252px;width:176px;height:4px;background:#2e2e2e"></div>
<div class="a" style="left:824px;top:256px;width:176px;height:13px;background:#353535"></div>
<div class="a" style="left:824.5px;top:256px;width:31px;height:13px;background:#4a4a4a"></div>
<svg class="a" style="left:826px;top:258px" width="6" height="9"><polygon points="3,1 5,3.5 1,3.5" fill="#ccc"/><polygon points="3,7.5 5,5 1,5" fill="#ccc"/></svg>
<div class="t" style="left:833px;top:257px;color:#e0e0e0">描边</div>
<div class="a" style="left:856.5px;top:256px;width:29px;height:13px;background:#3e3e3e"></div>
<div class="t" style="left:861px;top:257px;color:#9c9c9c">渐变</div>
<div class="a" style="left:886.5px;top:256px;width:37px;height:13px;background:#3e3e3e"></div>
<div class="t" style="left:889px;top:257px;color:#9c9c9c">透明度</div>


<!-- stroke panel content -->
<div class="t" style="left:845px;top:275px;color:#e0e0e0">粗细 :</div>
<div class="a" style="left:872px;top:274.5px;width:62px;height:14px;background:#2e2e2e"></div>
<div class="a" style="left:873px;top:275.5px;width:11px;height:12px;background:#5a5a5a"></div>
<svg class="a" style="left:873px;top:275.5px" width="11" height="12"><polygon points="2.5,4.5 5.5,1.5 8.5,4.5" fill="none" stroke="#ddd" stroke-width="1"/><polygon points="2.5,7.5 5.5,10.5 8.5,7.5" fill="none" stroke="#ddd" stroke-width="1"/></svg>
<div class="a" style="left:884px;top:275.5px;width:38.5px;height:12px;background:#b9b9b9;font-family:'Liberation Mono',monospace;font-size:9px;line-height:12px;color:#111;padding-left:2px">8 pt</div>
<div class="a" style="left:923px;top:275.5px;width:11px;height:12px;background:#5a5a5a"></div>
<svg class="a" style="left:923px;top:275.5px" width="11" height="12"><polygon points="2.5,4.5 8.5,4.5 5.5,8" fill="#eee"/></svg>
<div class="t" style="left:845px;top:295px;color:#e0e0e0">端点 :</div>
<div class="a" style="left:871.5px;top:294px;width:50px;height:14px;background:#2e2e2e"></div>
<div class="a" style="left:872.5px;top:295px;width:15.5px;height:12px;background:#333"></div>
<svg class="a" style="left:872.5px;top:295px" width="16" height="12"><rect x="6" y="3" width="5" height="6" fill="#ddd"/><path d="M2,2.5 H12 M2,9.5 H12" stroke="#ddd" stroke-width="0.8" stroke-dasharray="1,1"/></svg>
<div class="a" style="left:889px;top:295px;width:15px;height:12px;background:#6a6a6a"></div>
<svg class="a" style="left:889px;top:295px" width="15" height="12"><path d="M12,3 H6 Q3,3 3,6 Q3,9 6,9 H12" stroke="#e8e8e8" stroke-width="2" fill="none"/><rect x="7" y="5" width="5" height="2" fill="#e8e8e8"/></svg>
<div class="a" style="left:905px;top:295px;width:15.5px;height:12px;background:#6a6a6a"></div>
<svg class="a" style="left:905px;top:295px" width="16" height="12"><rect x="3" y="3" width="9" height="6" fill="none" stroke="#e8e8e8" stroke-width="1.8"/><rect x="6" y="5" width="6" height="2" fill="#e8e8e8"/></svg>
<div class="t" style="left:845px;top:315px;color:#e0e0e0">边角 :</div>
<div class="a" style="left:871.5px;top:314px;width:50px;height:14px;background:#2e2e2e"></div>
<div class="a" style="left:872.5px;top:315px;width:15.5px;height:12px;background:#555"></div>
<div class="a" style="left:876px;top:318px;width:8px;height:7px;border-left:2.5px solid #ddd;border-top:2.5px solid #ddd"></div>
<div class="a" style="left:954.5px;top:313.5px;width:27px;height:13px;background:#c4c4c4;font-size:9.5px;line-height:13px;color:#111;padding-left:1px">10</div>
<div class="a" style="left:986px;top:314px;font-size:9px;line-height:12px;color:#ddd;font-weight:bold">x</div>
<div class="t" style="left:827px;top:335px;color:#e0e0e0">对齐描边 :</div>
<div class="a" style="left:871.5px;top:334px;width:50px;height:14px;background:#2e2e2e"></div>
<div class="a" style="left:872.5px;top:335px;width:15.5px;height:12px;background:#555"></div>
<div class="a" style="left:875.5px;top:338px;width:8px;height:7px;border-left:1.5px solid #ddd;border-bottom:1.5px solid #ddd"></div>
<!-- network monitor widget -->
<svg class="a" style="left:875px;top:308px" width="95" height="48">
<rect x="20" y="9" width="69" height="30.5" rx="15" fill="#23262e"/>
<circle cx="25" cy="24" r="19.5" fill="#3a3d50"/>
<path d="M25,5 A19,19 0 0 1 41,34" stroke="#5cc8a4" stroke-width="1.6" fill="none"/>
<path d="M41,34 A19,19 0 0 1 6.6,28.5" stroke="#b8c870" stroke-width="1.6" fill="none"/>
<path d="M6.6,28.5 A19,19 0 0 1 7.2,17.5" stroke="#d8b070" stroke-width="1.4" fill="none"/>
<text x="12.5" y="31" font-size="19" fill="#f2f2f2" font-family="Liberation Sans" textLength="18" lengthAdjust="spacingAndGlyphs">79</text>
<text x="32" y="30.5" font-size="7.5" fill="#f2f2f2" font-family="Liberation Sans">%</text>
<polygon points="50,14.5 53,17.5 50,20.5 47,17.5" fill="#4aa0d8"/>
<polygon points="51,29.5 54,32.5 51,35.5 48,32.5" fill="#40b070"/>
<text x="66" y="21" font-size="8.5" fill="#e8e8e8" font-family="Liberation Sans">0K/s</text>
<text x="66" y="36" font-size="8.5" fill="#e8e8e8" font-family="Liberation Sans">0K/s</text>
</svg>
<div class="a" style="left:827px;top:352.5px;width:169px;height:1px;background:#3a3a3a"></div>
<!-- dashed line section -->
<div class="a" style="left:828.5px;top:361.5px;width:8px;height:8px;background:#555;border:1px solid #333"></div>
<div class="t" style="left:840px;top:360px;color:#e0e0e0">虚线</div>
<div class="a" style="left:930.5px;top:358.5px;width:29px;height:14px;border:1px solid #3a3a3a;background:#4e4e4e"></div>
<div class="a" style="left:960px;top:358.5px;width:29px;height:14px;border:1px solid #3a3a3a;background:#4e4e4e"></div>
<svg class="a" style="left:930px;top:358px" width="60" height="15"><path d="M6,4 H24 V11 H6 Z" fill="none" stroke="#888" stroke-width="1.2" stroke-dasharray="4,2"/><path d="M36,4 H54 V11 H36 Z" fill="none" stroke="#888" stroke-width="1.2" stroke-dasharray="3,2"/></svg>
<div class="a" style="left:829px;top:377.5px;width:23.5px;height:13.5px;background:#6e6e6e;border:1px solid #3c3c3c"></div><div class="t" style="left:831.5px;top:392px;color:#8c8c8c">虚线</div><div class="a" style="left:855.5px;top:377.5px;width:23.5px;height:13.5px;background:#6e6e6e;border:1px solid #3c3c3c"></div><div class="t" style="left:858.0px;top:392px;color:#8c8c8c">间隙</div><div class="a" style="left:882px;top:377.5px;width:23.5px;height:13.5px;background:#6e6e6e;border:1px solid #3c3c3c"></div><div class="t" style="left:884.5px;top:392px;color:#8c8c8c">虚线</div><div class="a" style="left:908.5px;top:377.5px;width:23.5px;height:13.5px;background:#6e6e6e;border:1px solid #3c3c3c"></div><div class="t" style="left:911.0px;top:392px;color:#8c8c8c">间隙</div><div class="a" style="left:935px;top:377.5px;width:23.5px;height:13.5px;background:#6e6e6e;border:1px solid #3c3c3c"></div><div class="t" style="left:937.5px;top:392px;color:#8c8c8c">虚线</div><div class="a" style="left:961.5px;top:377.5px;width:23.5px;height:13.5px;background:#6e6e6e;border:1px solid #3c3c3c"></div><div class="t" style="left:964.0px;top:392px;color:#8c8c8c">间隙</div>
<div class="a" style="left:827px;top:403.5px;width:169px;height:1px;background:#3a3a3a"></div>
<div class="t" style="left:845px;top:414px;color:#e0e0e0">箭头 :</div>
<div class="a" style="left:871.5px;top:411.5px;width:41px;height:13.5px;background:#2e2e2e"></div>
<div class="a" style="left:872.5px;top:412.5px;width:27.5px;height:11.5px;background:#f2f2f2"></div>
<div class="a" style="left:876px;top:417.5px;width:20px;height:1.6px;background:#111"></div>
<div class="a" style="left:900.5px;top:412.5px;width:11px;height:11.5px;background:#5a5a5a"></div>
<svg class="a" style="left:900.5px;top:412.5px" width="11" height="12"><polygon points="2.5,4.5 8.5,4.5 5.5,8" fill="#eee"/></svg>
<div class="a" style="left:918px;top:411.5px;width:41px;height:13.5px;background:#2e2e2e"></div>
<div class="a" style="left:919px;top:412.5px;width:27.5px;height:11.5px;background:#f2f2f2"></div>
<div class="a" style="left:922.5px;top:417.5px;width:20px;height:1.6px;background:#111"></div>
<div class="a" style="left:947px;top:412.5px;width:11px;height:11.5px;background:#5a5a5a"></div>
<svg class="a" style="left:947px;top:412.5px" width="11" height="12"><polygon points="2.5,4.5 8.5,4.5 5.5,8" fill="#eee"/></svg>
<svg class="a" style="left:974px;top:413px" width="12" height="11"><path d="M1,3.5 H11 M1,7.5 H11" stroke="#aaa" stroke-width="1.1"/><path d="M8,1.5 L11,3.5 M4,9.5 L1,7.5" stroke="#aaa" stroke-width="1"/></svg>
<div class="a" style="left:877px;top:434px;width:34.5px;height:13px;background:#2e2e2e"></div>
<div class="a" style="left:878px;top:435px;width:10px;height:11px;background:#5a5a5a"></div>
<div class="a" style="left:888px;top:435px;width:22.5px;height:11px;background:#7e7e7e;font-family:'Liberation Mono',monospace;font-size:8px;line-height:11px;color:#222;letter-spacing:-0.5px;padding-left:1px">100%</div>
<div class="a" style="left:918px;top:434px;width:40.5px;height:13px;background:#2e2e2e"></div>
<div class="a" style="left:919px;top:435px;width:11px;height:11px;background:#5a5a5a"></div>
<div class="a" style="left:931px;top:435px;width:27px;height:11px;background:#7e7e7e;font-family:'Liberation Mono',monospace;font-size:8px;line-height:11px;color:#222;letter-spacing:-0.5px;padding-left:2px">100%</div>
<svg class="a" style="left:971px;top:434px" width="16" height="13"><path d="M1,6.5 H5 M11,6.5 H15" stroke="#888" stroke-width="1"/><rect x="5.5" y="2" width="5" height="9" rx="2.5" fill="none" stroke="#999" stroke-width="1.2"/></svg>
<!-- duplicate (curl) lower part -->
<div class="a" style="left:828.5px;top:443.5px;width:8px;height:8px;background:#555;border:1px solid #333"></div>
<div class="t" style="left:840px;top:441px;color:#e0e0e0">虚线</div>
<div class="a" style="left:829px;top:459px;width:23.5px;height:13.5px;background:#6e6e6e;border:1px solid #3c3c3c"></div><div class="t" style="left:831.5px;top:473px;color:#8c8c8c">虚线</div><div class="a" style="left:855.5px;top:459px;width:23.5px;height:13.5px;background:#6e6e6e;border:1px solid #3c3c3c"></div><div class="t" style="left:858.0px;top:473px;color:#8c8c8c">间隙</div><div class="a" style="left:882px;top:459px;width:23.5px;height:13.5px;background:#6e6e6e;border:1px solid #3c3c3c"></div><div class="t" style="left:884.5px;top:473px;color:#8c8c8c">虚线</div><div class="a" style="left:908.5px;top:459px;width:23.5px;height:13.5px;background:#6e6e6e;border:1px solid #3c3c3c"></div><div class="t" style="left:911.0px;top:473px;color:#8c8c8c">间隙</div><div class="a" style="left:935px;top:459px;width:12px;height:13.5px;background:#6e6e6e;border:1px solid #3c3c3c"></div><div class="t" style="left:937.5px;top:473px;color:#8c8c8c">虚</div>
<div class="a" style="left:827px;top:484.5px;width:169px;height:1px;background:#3a3a3a"></div>
<svg class="a" style="left:955px;top:487px" width="40" height="12"><path d="M7,2 L3,6 L7,10 M12,2 L9,10" stroke="#777" stroke-width="1.2" fill="none"/><path d="M31,2 H39 M31,10 H39 M32.5,4 L35,6.5 L37.5,4" stroke="#888" stroke-width="1" fill="none"/></svg>
<div class="t" style="left:845px;top:494px;color:#e0e0e0">箭头 :</div>
<div class="a" style="left:871.5px;top:493px;width:41px;height:13.5px;background:#2e2e2e"></div>
<div class="a" style="left:872.5px;top:494px;width:27.5px;height:11.5px;background:#f2f2f2"></div>
<div class="a" style="left:876px;top:499px;width:20px;height:1.6px;background:#111"></div>
<div class="a" style="left:903.5px;top:494px;width:9px;height:11.5px;background:#5a5a5a"></div>
<svg class="a" style="left:903px;top:494px" width="10" height="12"><polygon points="2,4.5 8,4.5 5,8" fill="#eee"/></svg>
<div class="a" style="left:918px;top:493px;width:30px;height:13.5px;background:#2e2e2e"></div>
<div class="a" style="left:919px;top:494px;width:27.5px;height:11.5px;background:#f2f2f2"></div>
<div class="a" style="left:922.5px;top:499px;width:20px;height:1.6px;background:#111"></div>
<!-- curl dark region -->
<svg class="a" style="left:824px;top:490px" width="176" height="42" viewBox="824 490 176 42">
<path d="M1000,500 L948,500 Q944,514 920,519 Q895,523 870,517 L860,515 L852,516 L852,531 L1000,531 Z" fill="#2f2f2f"/>
<path d="M858,512 L880,513 L905,511" stroke="#262626" stroke-width="1.5" fill="none"/>
<circle cx="847" cy="518" r="6" fill="#c4c4c4" stroke="#888" stroke-width="1"/>
<rect x="827" y="521" width="25" height="10" fill="#4a4a4a"/>
<text x="829" y="530" font-size="8" fill="#ddd" font-family="Liberation Sans">图层</text>
</svg>
<!-- avatar -->
<svg class="a" style="left:980px;top:245px" width="20" height="52">
<clipPath id="avc"><circle cx="26" cy="26" r="20.5"/></clipPath>
<circle cx="26" cy="26" r="22" fill="#f4f4f4"/>
<g clip-path="url(#avc)"><rect x="0" y="0" width="50" height="52" fill="#9c96a4"/><path d="M6,10 Q14,4 22,8 L24,52 L14,52 Q8,30 6,10 Z" fill="#c8c2cc"/><path d="M16,10 Q20,20 18,35 L22,52 L26,52 L24,10 Z" fill="#3c2a32"/></g>
</svg>

<!-- sogou IME bar -->
<div class="a" style="left:655px;top:90px;width:134px;height:18px;background:#fcfcfc;border:1px solid #d8d8d8;box-shadow:0 0 2px rgba(0,0,0,0.15)"></div>
<svg class="a" style="left:636px;top:86px" width="155" height="24">
<g transform="rotate(-12 12 11)"><rect x="3.5" y="3" width="18" height="17" rx="2" fill="#e0592a"/>
<path d="M17,7.5 Q12,5.5 8.5,7.5 Q6.5,10 10,11.5 L15,12.5 Q18,14 15.5,16 Q11,17.5 7.5,15.5" stroke="#fff" stroke-width="2.6" fill="none"/></g>
<text x="26" y="17" font-size="12" font-weight="bold" fill="#2a6fb0">英</text>
<mask id="moonm"><rect x="40" y="0" width="20" height="24" fill="#fff"/><circle cx="53.5" cy="9.5" r="5.3" fill="#000"/></mask><circle cx="50" cy="13" r="5.8" fill="#2a6fb0" mask="url(#moonm)"/>
<circle cx="62" cy="11" r="1.4" fill="#2a6fb0"/><path d="M66,13 Q66.5,16 64.5,17.5" stroke="#2a6fb0" stroke-width="1.6" fill="none"/>
<rect x="77.5" y="6" width="5" height="9" rx="2.5" fill="#2a6fb0"/><path d="M75.5,11 Q75.5,16.5 80,16.5 Q84.5,16.5 84.5,11 M80,16.5 V20 M77,20 H83" stroke="#2a6fb0" stroke-width="1.3" fill="none"/>
<rect x="90.5" y="8" width="12" height="9" rx="1" fill="none" stroke="#2a6fb0" stroke-width="1.6"/><path d="M92.5,10.5 H100.5 M92.5,13 H100.5 M94,15.2 H99" stroke="#2a6fb0" stroke-width="1" stroke-dasharray="1,0.6"/>
<circle cx="113" cy="9" r="2" fill="#c8c8c8"/><rect x="109" y="12" width="11" height="7" rx="2" fill="#d4d4d4"/><path d="M111,14 H118" stroke="#eee" stroke-width="1"/>
<path d="M123,9 L126,7 Q128,9 130,7 L133,9 L132,12 L130.5,11.5 V19 H125.5 V11.5 L124,12 Z" fill="#2a6fb0"/>
<path d="M140,19 L145.5,13 Q144,9 147,7.5 Q149,6.8 150,7.5 L147.5,10 L149,11.5 L151.5,9 Q152,12.5 148.5,13.8 Q147.5,14 146.8,13.8 L141.5,20 Z" fill="#2a6fb0"/>
</svg>


<!-- taskbar bits -->
<div class="a" style="left:611px;top:533px;width:35px;height:6px;background:#555"></div>
<div class="a" style="left:923px;top:534px;font-size:9px;line-height:11px;color:#f0f0f0;font-weight:bold;letter-spacing:0.5px">23:54</div>
<svg class="a" style="left:804px;top:506px" width="14" height="14"><path d="M11,2 Q12,9 4,11 Q9,7 11,2 Z" fill="#f0f0f0"/></svg>
<!-- magenta arrows -->
<svg class="a" style="left:0;top:0" width="1000" height="539">
<polygon points="53,85.5 67,91 65,94.5 190,283 57,98.5 55.5,100.5" fill="#f02cf0"/>
<polygon points="321,264.5 328,278.5 323,281 316,331 318,280.5 315.5,277.5" fill="#f02cf0"/>
</svg>

<!-- corner triangles -->
<svg class="a" style="left:0;top:0" width="1000" height="539">
<line x1="36" y1="0" x2="0" y2="37" stroke="#262626" stroke-width="2"/><polygon points="0,0 35,0 0,36" fill="#fff"/>
<line x1="960" y1="0" x2="1000" y2="37" stroke="#262626" stroke-width="2"/><polygon points="961,0 1000,0 1000,36" fill="#fff"/>
<line x1="0" y1="502" x2="38" y2="539" stroke="#262626" stroke-width="2"/><polygon points="0,503 37,539 0,539" fill="#fff"/>
<polygon points="1000,502 962,539 1000,539" fill="#fff"/>
</svg>
</body></html>
